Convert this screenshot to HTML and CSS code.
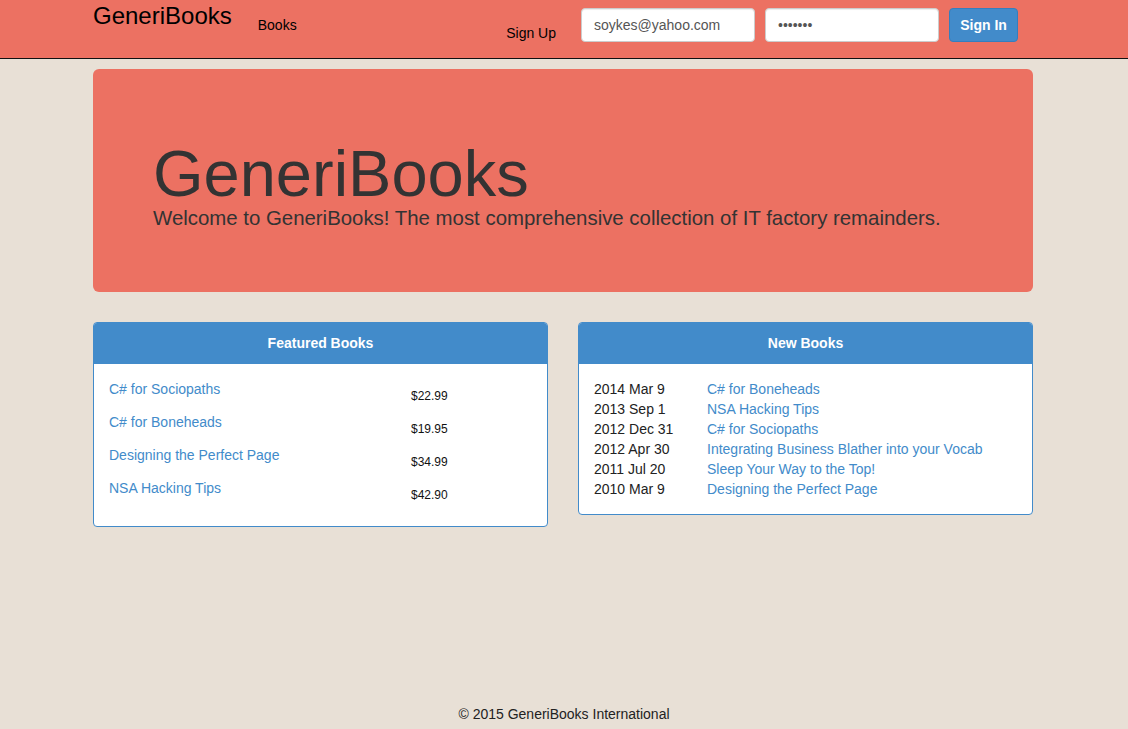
FILE: index.html
```html
<!DOCTYPE html>
<html>
<head>
<meta charset="utf-8">
<title>GeneriBooks</title>
<link rel="stylesheet" href="styles.css">
</head>
<body>
<div class="page">
  <header class="navbar">
    <div class="container nav-inner">
      <a class="brand" href="#">GeneriBooks</a>
      <a class="nav-link" href="#">Books</a>
      <div class="nav-spacer"></div>
      <a class="signup" href="#">Sign Up</a>
      <form class="signin">
        <input class="field" type="text" value="soykes@yahoo.com">
        <input class="field" type="password" value="secret1">
        <button class="btn" type="button">Sign In</button>
      </form>
    </div>
  </header>

  <main class="container">
    <section class="jumbotron">
      <h1>GeneriBooks</h1>
      <p>Welcome to GeneriBooks! The most comprehensive collection of IT factory remainders.</p>
    </section>

    <div class="panels">
      <section class="panel">
        <div class="panel-heading">Featured Books</div>
        <div class="panel-body">
          <div class="feat-row"><a href="#">C# for Sociopaths</a><span class="price">$22.99</span></div>
          <div class="feat-row"><a href="#">C# for Boneheads</a><span class="price">$19.95</span></div>
          <div class="feat-row"><a href="#">Designing the Perfect Page</a><span class="price">$34.99</span></div>
          <div class="feat-row"><a href="#">NSA Hacking Tips</a><span class="price">$42.90</span></div>
        </div>
      </section>
      <section class="panel">
        <div class="panel-heading">New Books</div>
        <div class="panel-body">
          <div class="new-row"><span>2014 Mar 9</span><a href="#">C# for Boneheads</a></div>
          <div class="new-row"><span>2013 Sep 1</span><a href="#">NSA Hacking Tips</a></div>
          <div class="new-row"><span>2012 Dec 31</span><a href="#">C# for Sociopaths</a></div>
          <div class="new-row"><span>2012 Apr 30</span><a href="#">Integrating Business Blather into your Vocab</a></div>
          <div class="new-row"><span>2011 Jul 20</span><a href="#">Sleep Your Way to the Top!</a></div>
          <div class="new-row"><span>2010 Mar 9</span><a href="#">Designing the Perfect Page</a></div>
        </div>
      </section>
    </div>
  </main>

  <footer class="footer">&copy; 2015 GeneriBooks International</footer>
</div>
</body>
</html>
```

FILE: styles.css
```css
* { box-sizing: border-box; }
html, body { margin: 0; padding: 0; }
body {
  background: #e8e0d6;
  font-family: "Liberation Sans", Arial, Helvetica, sans-serif;
  font-size: 14px;
  line-height: 20px;
  color: #333;
}
a { text-decoration: none; color: #428bca; }
.page {
  min-height: 100vh;
  display: flex;
  flex-direction: column;
}
.container {
  width: 940px;
  margin: 0 auto;
}
.navbar {
  background: #ec7162;
  height: 59px;
  border-bottom: 1px solid #111;
  padding-right: 2px;
}
main.container {
  margin-left: calc((100% - 942px) / 2);
  margin-right: auto;
}
.nav-inner {
  display: flex;
  align-items: flex-start;
  height: 58px;
}
.brand {
  color: #000;
  font-size: 24px;
  line-height: 30px;
  padding-top: 1px;
}
.nav-link {
  color: #000;
  margin-left: 26px;
  padding-top: 15px;
}
.nav-spacer { flex: 1; }
.signup {
  color: #000;
  padding-top: 23px;
}
.signin {
  display: flex;
  gap: 10px;
  margin: 8px 15px 0 25px;
}
.field {
  width: 174px;
  height: 34px;
  border: 1px solid #ccc;
  border-radius: 4px;
  background: #fff;
  padding: 6px 12px;
  font-family: inherit;
  font-size: 14px;
  color: #555;
  box-shadow: inset 0 1px 1px rgba(0,0,0,.075);
}
.btn {
  height: 34px;
  width: 69px;
  padding: 0;
  background: #428bca;
  border: 1px solid #357ebd;
  border-radius: 4px;
  color: #fff;
  font-family: inherit;
  font-weight: bold;
  font-size: 14px;
}
.jumbotron {
  margin-top: 10px;
  background: #ec7162;
  border-radius: 6px;
  padding: 75px 60px 58px;
  height: 223px;
}
.jumbotron h1 {
  margin: 0;
  font-size: 65px;
  line-height: 60px;
  font-weight: normal;
  color: #333;
}
.jumbotron p {
  margin: 0;
  font-size: 20.4px;
  line-height: 29px;
  font-weight: normal;
  color: #333;
}
.panels {
  margin-top: 30px;
  display: grid;
  grid-template-columns: 455px 455px;
  gap: 30px;
  align-items: start;
}
.panel {
  background: #fff;
  border: 1px solid #428bca;
  border-radius: 4px;
  overflow: hidden;
}
.panel-heading {
  background: #428bca;
  color: #fff;
  font-weight: bold;
  text-align: center;
  height: 41px;
  line-height: 41px;
}
.panel-body {
  padding: 15px;
}
.feat-row {
  display: grid;
  grid-template-columns: 302px 1fr;
  height: 33px;
}
.price {
  font-size: 12px;
  padding-top: 7px;
  color: #111;
}
.new-row {
  display: grid;
  grid-template-columns: 113px 1fr;
  height: 20px;
}
.new-row span { color: #222; }
.footer {
  margin-top: auto;
  text-align: center;
  padding-bottom: 5px;
  color: #222;
}
```
